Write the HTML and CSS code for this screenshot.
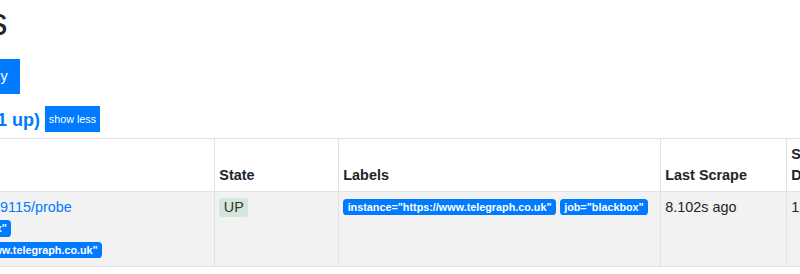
FILE: index.html
```html
<!DOCTYPE html>
<html>
<head>
    <title>Targets</title>
    <link rel="stylesheet" href="styles.css">
</head>
<body>
    <div class="page">
        <h1 class="title">Targets</h1>
        <div class="filter">
            <button class="btn">Only unhealthy</button>
        </div>
        <div class="pool-head">
            <a class="pool-name" href="#pool-blackbox">blackbox (1/1 up)</a>
            <button class="btn btn-xs">show less</button>
        </div>
        <table class="targets">
            <colgroup>
                <col class="col-endpoint">
                <col class="col-state">
                <col class="col-labels">
                <col class="col-scrape">
                <col class="col-duration">
                <col class="col-error">
            </colgroup>
            <thead>
                <tr>
                    <th>Endpoint</th>
                    <th>State</th>
                    <th>Labels</th>
                    <th>Last Scrape</th>
                    <th>Scrape Duration</th>
                    <th>Error</th>
                </tr>
            </thead>
            <tbody>
                <tr class="odd">
                    <td>
                        <a class="endpoint" href="#probe">http://localhost:9115/probe</a>
                        <div><span class="badge">module="http_2xx"</span></div>
                        <div><span class="badge">target="https://www.telegraph.co.uk"</span></div>
                    </td>
                    <td><span class="state-up">UP</span></td>
                    <td>
                        <span class="badge">instance="https://www.telegraph.co.uk"</span>
                        <span class="badge">job="blackbox"</span>
                    </td>
                    <td>8.102s ago</td>
                    <td>17.462ms</td>
                    <td></td>
                </tr>
            </tbody>
        </table>
    </div>
</body>
</html>
```
FILE: styles.css
```css
body {
    margin: 0;
    font-family: "Liberation Sans", Arial, sans-serif;
    font-size: 14.4px;
    line-height: 1.5;
    color: #212529;
    background: #fff;
    overflow: hidden;
}
.page {
    margin: 0 0 0 -102px;
}
.title {
    font-size: 38px;
    font-weight: 500;
    line-height: 1.2;
    margin: 0 0 13.6px -15px;
}
.filter {
    display: flex;
    margin-left: 2px;
}
.btn {
    font-family: inherit;
    font-size: 14.4px;
    line-height: 21.6px;
    padding: 5.4px 10.8px;
    border: 0.9px solid #007bff;
    border-radius: 0;
    background: #007bff;
    color: #fff;
}
.btn-xs {
    font-size: 10.8px;
    line-height: 16.2px;
    padding: 3.6px 2.7px;
}
.pool-head {
    display: flex;
    align-items: flex-end;
    gap: 5px;
    margin: 12.8px 0 0 -5px;
}
.pool-name {
    font-size: 18px;
    font-weight: 700;
    line-height: 1.2;
    color: #007bff;
    text-decoration: none;
}
.targets {
    margin-top: 6.6px;
    border-collapse: collapse;
    table-layout: fixed;
    width: 1158px;
}
.col-endpoint { width: 316px; }
.col-state { width: 124px; }
.col-labels { width: 322px; }
.col-scrape { width: 126px; }
.col-duration { width: 70px; }
.col-error { width: 200px; }
.targets th,
.targets td {
    border: 1px solid #dee2e6;
    padding: 4.32px;
    text-align: left;
    vertical-align: top;
}
.targets th {
    vertical-align: bottom;
    font-weight: 700;
}
.targets .odd {
    background: #f2f2f2;
}
.endpoint {
    color: #007bff;
    text-decoration: none;
}
.badge {
    display: inline-block;
    font-size: 10.8px;
    font-weight: 700;
    line-height: 1;
    padding: 2.7px 4.32px;
    border-radius: 3.6px;
    background: #007bff;
    color: #fff;
    white-space: nowrap;
    vertical-align: 1px;
}
.state-up {
    display: inline-block;
    padding: 0 4.5px;
    line-height: 19px;
    border-radius: 3px;
    background: #d5e6da;
    color: #333;
}
```
